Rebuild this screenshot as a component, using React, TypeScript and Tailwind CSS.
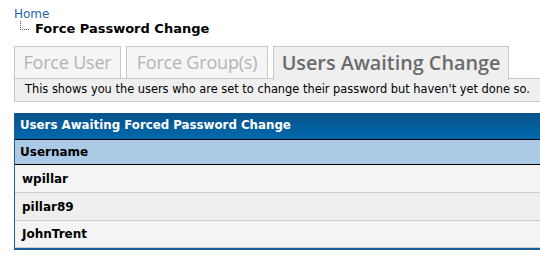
import React from "react";

const verdana = { fontFamily: "Verdana, 'DejaVu Sans', sans-serif" };

export default function App() {
  return (
    <div className="w-[540px] h-[260px] bg-white overflow-hidden" style={verdana}>
      <div className="pl-[14px] pt-[7px]">
        <div className="text-[12px] leading-[14px] text-[#1e64b4]">Home</div>
        <div className="flex items-start">
          <div className="ml-[6px] mt-[0px] w-[9px] h-[9px] border-l border-b border-dotted border-[#555]"></div>
          <div className="ml-[6px] mt-[1px] text-[13px] leading-[14px] font-bold text-black">Force Password Change</div>
        </div>
      </div>
      <div className="ml-[14px] mt-[10px] flex items-start gap-[5px]" style={{ fontFamily: "'Open Sans', 'Noto Sans', sans-serif" }}>
        <div className="h-[33px] w-[107px] flex items-center justify-center border border-[#c8c8c8] bg-[#f5f5f5] text-[18px] tracking-[-0.2px] text-[#b4b4b4]">Force User</div>
        <div className="h-[33px] w-[142px] flex items-center justify-center border border-[#c8c8c8] bg-[#f5f5f5] text-[18px] tracking-[-0.2px] text-[#b4b4b4]">Force Group(s)</div>
        <div className="relative z-10 h-[34px] w-[236px] -mb-px pb-[1px] flex items-center justify-center border border-b-0 border-[#c8c8c8] bg-[#efefef] text-[19.8px] font-semibold text-[#6b6b6b]">Users Awaiting Change</div>
      </div>
      <div className="ml-[14px] -mt-px h-[24px] border border-r-0 border-[#c8c8c8] bg-[#efefef] flex items-center pl-[10px] text-[11.4px] text-black">
        This shows you the users who are set to change their password but haven't yet done so.
      </div>
      <div className="ml-[14px] mt-[11px] border-l border-b-2 border-[#1d5d96]">
        <div className="h-[27px] flex items-center pl-[5px] text-[11.8px] font-bold text-white border-b border-black bg-gradient-to-b from-[#07528a] to-[#0069ad]">
          Users Awaiting Forced Password Change
        </div>
        <div className="h-[25px] flex items-center pl-[5px] text-[12px] font-bold text-black bg-[#abcae6] border-b border-black">Username</div>
        <div className="h-[28px] flex items-center pl-[7px] text-[12px] font-bold text-black bg-[#f4f4f4] border-b border-[#cfcfcf]">wpillar</div>
        <div className="h-[28px] flex items-center pl-[7px] text-[12px] font-bold text-black bg-[#efefef] border-b border-[#cfcfcf]">pillar89</div>
        <div className="h-[27px] flex items-center pl-[7px] text-[12px] font-bold text-black bg-[#f4f4f4] border-b border-[#cfcfcf]">JohnTrent</div>
      </div>
    </div>
  );
}
